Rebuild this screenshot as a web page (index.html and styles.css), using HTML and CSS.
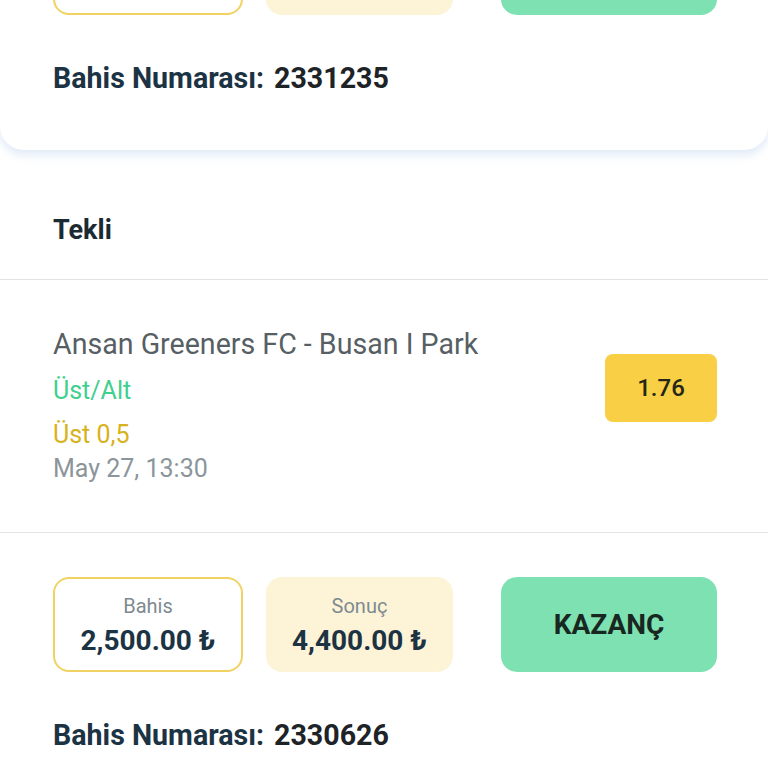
FILE: index.html
```html
<!DOCTYPE html>
<html lang="tr">
<head>
<meta charset="utf-8">
<title>Bahislerim</title>
<link rel="stylesheet" href="styles.css">
</head>
<body>
<div class="page">
  <section class="card">
    <div class="amounts">
      <div class="amount amount-stake">
        <span class="amount-label">Bahis</span>
        <span class="amount-value">1,000.00 ₺</span>
      </div>
      <div class="amount amount-result">
        <span class="amount-label">Sonuç</span>
        <span class="amount-value">1,850.00 ₺</span>
      </div>
      <div class="status">KAZANÇ</div>
    </div>
    <div class="bet-no"><span class="bet-no-label">Bahis Numarası:</span><span class="bet-no-value">2331235</span></div>
  </section>

  <section class="bet">
    <h2 class="bet-type">Tekli</h2>
    <div class="match">
      <div class="match-info">
        <div class="match-title">Ansan Greeners FC - Busan I Park</div>
        <div class="match-market">Üst/Alt</div>
        <div class="match-pick">Üst 0,5</div>
        <div class="match-date">May 27, 13:30</div>
      </div>
      <div class="odds">1.76</div>
    </div>
    <div class="bet-footer">
      <div class="amounts">
        <div class="amount amount-stake">
          <span class="amount-label">Bahis</span>
          <span class="amount-value">2,500.00 ₺</span>
        </div>
        <div class="amount amount-result">
          <span class="amount-label">Sonuç</span>
          <span class="amount-value">4,400.00 ₺</span>
        </div>
        <div class="status">KAZANÇ</div>
      </div>
      <div class="bet-no"><span class="bet-no-label">Bahis Numarası:</span><span class="bet-no-value">2330626</span></div>
    </div>
  </section>
</div>
</body>
</html>
```
FILE: styles.css
```css
* { box-sizing: border-box; }
html, body { margin: 0; padding: 0; background: #ffffff; }
body {
  font-family: Roboto, "Liberation Sans", "DejaVu Sans", sans-serif;
  color: #1c2f3d;
  overflow: hidden;
}
.page { margin-top: -80px; }

.card {
  background: #fff;
  border-radius: 0 0 24px 24px;
  box-shadow: 0 5px 10px rgba(140, 180, 225, 0.28);
  padding: 0 51px 55px 53px;
}

.amounts {
  display: flex;
  height: 95px;
}
.amount {
  display: flex;
  flex-direction: column;
  align-items: center;
  padding-top: 17px;
  border-radius: 16px;
}
.amount-stake {
  width: 190px;
  border: 2px solid #f1d262;
  padding-top: 15px;
  background: #fff;
}
.amount-result {
  width: 187px;
  margin-left: 23px;
  background: #fdf4d8;
}
.amount-label {
  font-size: 20px;
  line-height: 24px;
  color: #7e8a90;
}
.amount-value {
  margin-top: 6px;
  font-size: 28px;
  line-height: 34px;
  font-weight: 700;
  color: #1c3344;
}
.status {
  flex: 1;
  margin-left: 48px;
  background: #7ee1b1;
  border-radius: 16px;
  display: flex;
  align-items: center;
  justify-content: center;
  font-size: 28px;
  font-weight: 700;
  color: #18271f;
}

.bet-no {
  margin-top: 46px;
  font-size: 28.6px;
  line-height: 34px;
  font-weight: 700;
  display: flex;
  gap: 10px;
}
.bet-no-label { color: #1c3344; }
.bet-no-value { color: #1e2327; }

.bet-type {
  margin: 0;
  padding: 63px 53px 32px;
  font-size: 27px;
  line-height: 34px;
  font-weight: 700;
  color: #1c2a31;
  border-bottom: 1px solid #e3e3e3;
}

.match {
  display: flex;
  justify-content: space-between;
  align-items: flex-start;
  padding: 46px 51px 46px 53px;
  border-bottom: 1px solid #e3e3e3;
}
.match-title {
  font-size: 28.6px;
  line-height: 36px;
  color: #575f64;
}
.match-market {
  margin-top: 12px;
  font-size: 25px;
  line-height: 34px;
  color: #3fcf8f;
}
.match-pick {
  margin-top: 10px;
  font-size: 25px;
  line-height: 34px;
  color: #d8b21c;
}
.match-date {
  font-size: 25px;
  line-height: 34px;
  color: #8b959b;
}
.odds {
  margin-top: 28px;
  width: 112px;
  height: 68px;
  background: #f9cf45;
  border-radius: 8px;
  display: flex;
  align-items: center;
  justify-content: center;
  font-size: 24px;
  font-weight: 500;
  color: #262616;
}

.bet-footer {
  padding: 44px 51px 40px 53px;
}
```
